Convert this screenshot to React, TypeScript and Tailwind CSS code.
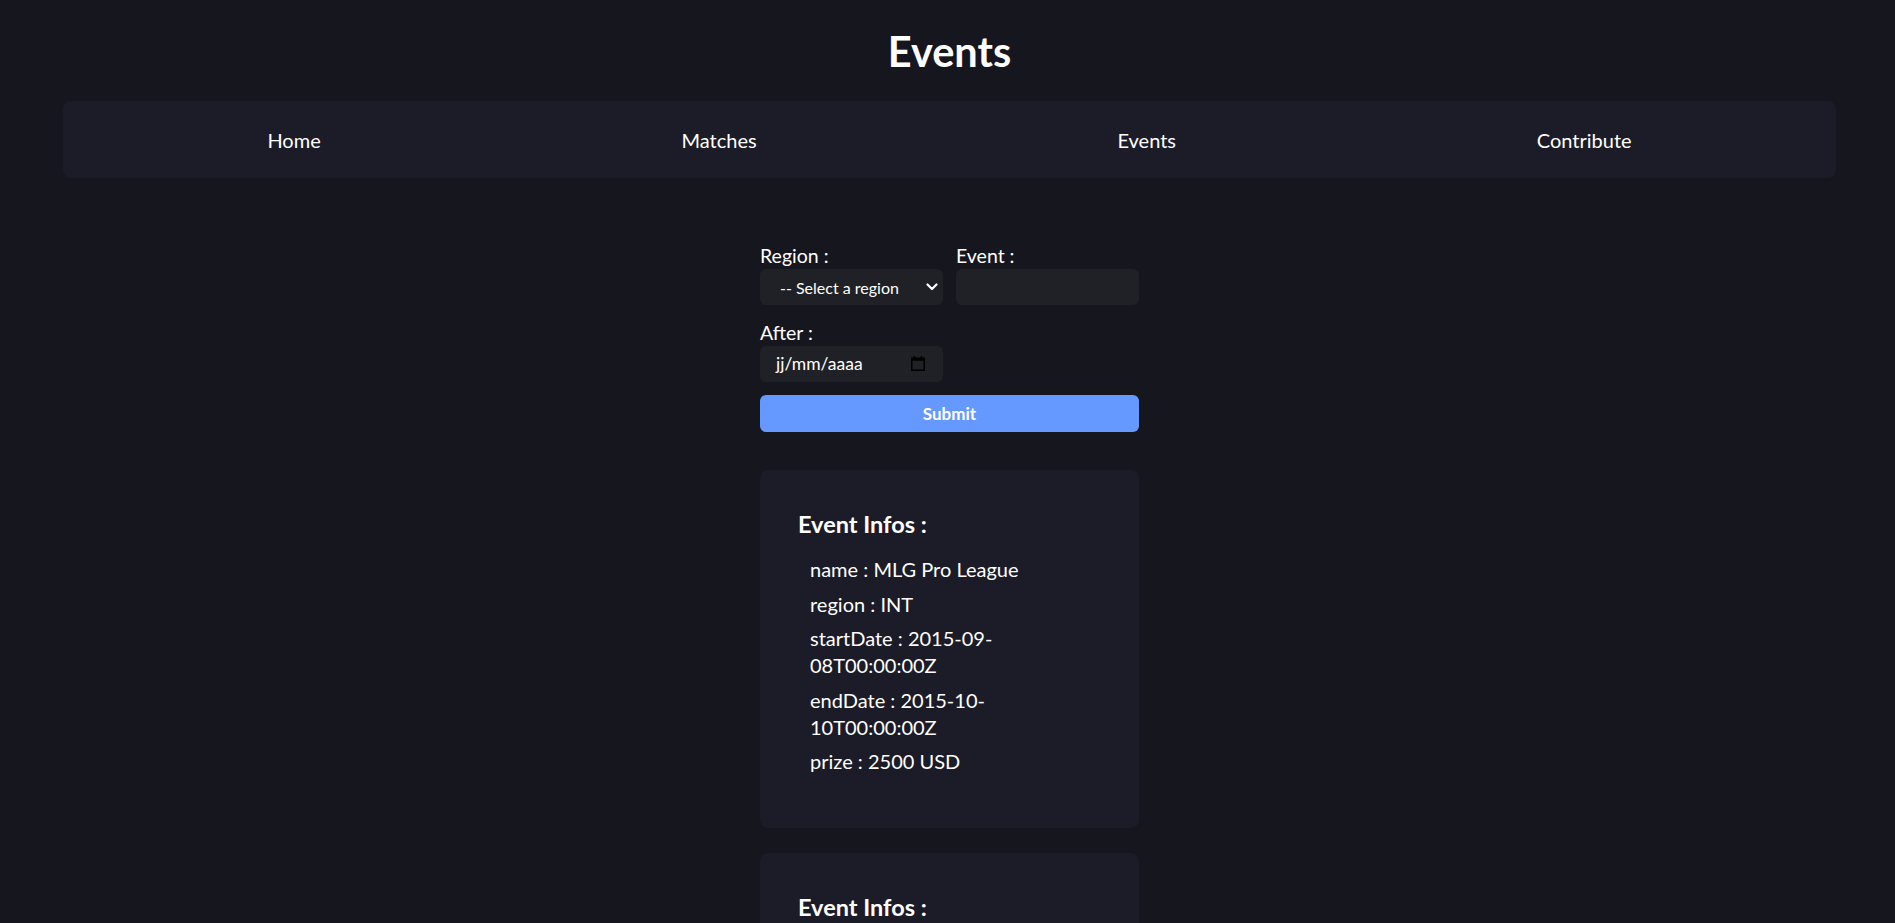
import { Fragment } from 'react';

type EventInfo = {
  name: string;
  region: string;
  startDate: string;
  endDate: string;
  prize: string;
};

const navLinks = ['Home', 'Matches', 'Events', 'Contribute'];

const events: EventInfo[] = [
  {
    name: 'MLG Pro League',
    region: 'INT',
    startDate: '2015-09-08T00:00:00Z',
    endDate: '2015-10-10T00:00:00Z',
    prize: '2500 USD',
  },
  {
    name: 'ESL Pro League Season 2',
    region: 'EU',
    startDate: '2015-10-12T00:00:00Z',
    endDate: '2015-12-06T00:00:00Z',
    prize: '5000 USD',
  },
];

const Chevron = () => (
  <svg width="12" height="8" viewBox="0 0 12 8" fill="none" className="shrink-0">
    <polyline points="1.5,1.5 6,6 10.5,1.5" stroke="#ffffff" strokeWidth="2.2" strokeLinecap="round" strokeLinejoin="round" />
  </svg>
);

const CalendarIcon = () => (
  <svg width="14" height="15" viewBox="0 0 14 15" fill="none" className="shrink-0">
    <rect x="0.75" y="2.25" width="12.5" height="12" stroke="#000000" strokeWidth="1.5" />
    <rect x="0.75" y="2.25" width="12.5" height="2.5" fill="#000000" />
    <line x1="3.5" y1="0" x2="3.5" y2="3" stroke="#000000" strokeWidth="1.5" />
    <line x1="10.5" y1="0" x2="10.5" y2="3" stroke="#000000" strokeWidth="1.5" />
  </svg>
);

const EventCard = ({ event }: { event: EventInfo }) => {
  const rows: [string, string][] = [
    ['name', event.name],
    ['region', event.region],
    ['startDate', event.startDate],
    ['endDate', event.endDate],
    ['prize', event.prize],
  ];

  return (
    <div className="rounded-lg bg-[#1c1c28] px-[38px] pt-[40px] pb-[53px]">
      <h2 className="text-[23.5px] leading-[29px] font-bold">Event Infos :</h2>
      <ul className="mt-[17px] pl-3 flex flex-col gap-[7.5px]">
        {rows.map(([key, value]) => (
          <li key={key} className="text-[20px] leading-[27px]">
            {key} : {value}
          </li>
        ))}
      </ul>
    </div>
  );
};

export default function App() {
  return (
    <div className="min-h-screen bg-[#16161f] text-white font-['Lato','Liberation_Sans',sans-serif] pt-[27px] pb-10">
      <h1 className="text-center text-[41.5px] leading-[48px] font-bold pl-1">Events</h1>

      <nav className="mt-[26px] ml-[63px] mr-[59px] h-[77px] rounded-lg bg-[#1c1c28] px-6 flex items-center justify-around">
        {navLinks.map(link => (
          <a key={link} href="#" className="text-[20px] leading-[26px] text-white">
            {link}
          </a>
        ))}
      </nav>

      <main className="mt-[65px] flex flex-col items-center pl-1">
        <form className="w-[379px]" onSubmit={e => e.preventDefault()}>
          <div className="grid grid-cols-2 gap-x-[13px]">
            <label className="flex flex-col">
              <span className="text-[19.5px] leading-[25.5px]">Region :</span>
              <div className="h-[36.5px] rounded-md bg-[#202126] pl-5 pr-[5px] flex items-center justify-between">
                <span className="text-[16px] pt-[2px]">-- Select a region</span>
                <Chevron />
              </div>
            </label>
            <label className="flex flex-col">
              <span className="text-[19.5px] leading-[25.5px]">Event :</span>
              <input type="text" className="h-[36.5px] rounded-md bg-[#202126] px-3 text-[16px] outline-none" />
            </label>
          </div>

          <div className="mt-[15px] w-[183px] flex flex-col">
            <span className="text-[19.5px] leading-[25.5px]">After :</span>
            <div className="h-[36.5px] rounded-md bg-[#202126] pl-4 pr-[18px] flex items-center justify-between">
              <span className="text-[17.5px] pt-px">jj/mm/aaaa</span>
              <CalendarIcon />
            </div>
          </div>

          <button type="submit" className="mt-[13px] w-full h-[37px] rounded-md bg-[#6699ff] text-[17px] font-bold text-white">
            Submit
          </button>
        </form>

        <section className="mt-[38px] w-[379px] flex flex-col gap-[25px]">
          {events.map(event => (
            <Fragment key={event.name}>
              <EventCard event={event} />
            </Fragment>
          ))}
        </section>
      </main>
    </div>
  );
}
